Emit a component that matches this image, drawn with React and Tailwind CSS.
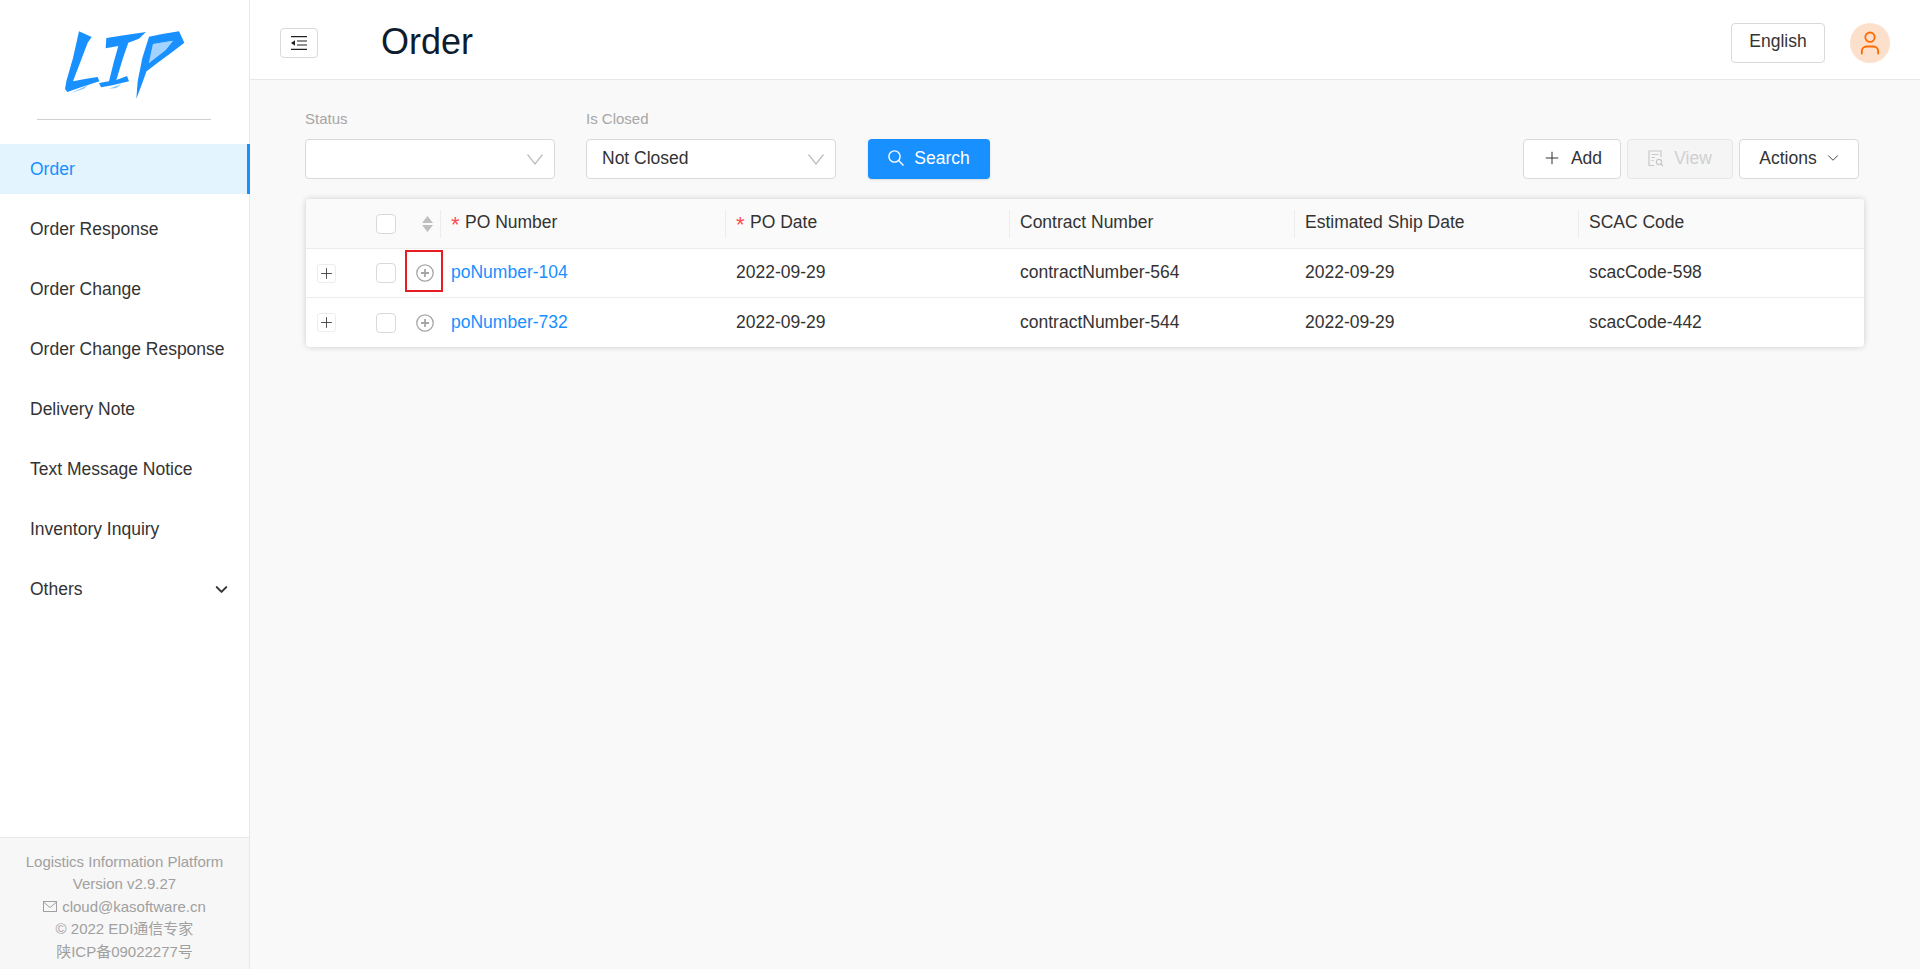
import { Plus, ChevronDown, User } from 'lucide-react'

const menu = ['Order', 'Order Response', 'Order Change', 'Order Change Response', 'Delivery Note', 'Text Message Notice', 'Inventory Inquiry']

const rows = [
  { po: 'poNumber-104', date: '2022-09-29', contract: 'contractNumber-564', ship: '2022-09-29', scac: 'scacCode-598' },
  { po: 'poNumber-732', date: '2022-09-29', contract: 'contractNumber-544', ship: '2022-09-29', scac: 'scacCode-442' },
]

function Logo() {
  return (
    <svg width="130" height="74" viewBox="180 80 390 222" fill="#1890ff">
      {/* L */}
      <path d="M240 90 L278 107 L266 124 L222 240 L262 232 L296 227 L301 240 L250 256 L205 272 L198 263 L202 240 L222 170 Z" />
      <path d="M215 276 L268 250 L255 262 Z" opacity="0.5" />
      {/* I */}
      <path d="M322 110 L385 100 L441 92 L420 112 L388 124 L372 170 L352 236 L384 224 L390 240 L340 252 L306 258 L300 245 L330 240 L345 180 L358 134 L320 141 Z" />
      <path d="M330 262 L368 248 L352 260 Z" opacity="0.5" />
      {/* P */}
      <path d="M450 106 L490 98 L540 90 L556 124 L520 152 L476 184 L440 212 L444 190 L500 146 L522 118 L462 128 L446 200 L428 250 L412 292 L416 240 L430 170 Z" />
      <path d="M462 128 L522 118 L500 146 L446 192 Z" opacity="0.4" />
    </svg>
  )
}

function FoldIcon() {
  return (
    <svg width="16" height="14" viewBox="0 0 16 14" fill="none" stroke="#222" strokeWidth="1.2">
      <path d="M0 0.7H16M6 5H16M6 9H16M0 13.3H16" />
      <path d="M0 7 L4 4.2 V9.8 Z" fill="#222" stroke="none" />
    </svg>
  )
}

function Checkbox() {
  return <span className="block w-5 h-5 bg-white border border-[#d9d9d9] rounded-[4px]" />
}

function SelectBox({ label, value, className }) {
  return (
    <div className={className}>
      <div className="text-[15px] leading-5 text-[#a6a6a6] mb-[10px] h-[20px]">{label}</div>
      <div className="h-10 w-[250px] bg-white border border-[#d9d9d9] rounded-[4px] flex items-center justify-between pl-[15px] pr-[11px] text-[17.5px] text-[#333]">
        <span className="mb-[2px]">{value}</span>
        <svg width="16" height="11" viewBox="0 0 16 11" fill="none" stroke="#bfbfbf" strokeWidth="1.3">
          <path d="M0.5 0.5 L8 10 L15.5 0.5" />
        </svg>
      </div>
    </div>
  )
}

function HeaderCell({ children, required, className }) {
  return (
    <div className={`flex items-center pl-[10px] h-full ${className}`}>
      {required && <span className="w-[14px] text-[#ff4d4f] text-[22px] leading-none mt-[3px]">*</span>}
      <span className="mb-[2px]">{children}</span>
    </div>
  )
}

function Divider() {
  return <span className="block w-px h-[28px] bg-[#ececec]" />
}

export default function App() {
  return (
    <div className="flex h-[969px] w-[1920px] overflow-hidden bg-[#f9f9f9] text-[#333] text-[17.5px]" style={{ fontFamily: '"Liberation Sans", "Noto Sans CJK SC", sans-serif' }}>
      {/* Sidebar */}
      <aside className="w-[250px] shrink-0 flex flex-col bg-white border-r border-[#e8e8e8]">
        <div className="h-[144px] shrink-0 flex flex-col items-center">
          <div className="h-[119px] pt-[28px] pr-[2px]">
            <Logo />
          </div>
          <div className="w-[174px] h-px bg-[#cfcfcf] mr-[2px]" />
        </div>
        <nav className="flex-1">
          {menu.map((m, i) => (
            <div key={m} className={`h-[50px] mb-[10px] flex items-center pl-[30px] ${i === 0 ? 'bg-[#e3f4fe] text-[#1890ff] border-r-[3px] border-[#1890ff] mr-[-1px]' : 'text-[#333]'}`}>
              {m}
            </div>
          ))}
          <div className="h-[50px] flex items-center justify-between pl-[30px] pr-[18px]">
            <span>Others</span>
            <ChevronDown size={19} strokeWidth={2.6} />
          </div>
        </nav>
        <footer className="h-[132px] shrink-0 bg-[#f7f7f7] border-t border-[#e8e8e8] pt-[12.5px] text-center text-[15px] leading-[22.5px] text-[#a0a0a0]">
          <div>Logistics Information Platform</div>
          <div>Version v2.9.27</div>
          <div className="flex items-center justify-center gap-[5px]">
            <svg width="14" height="11" viewBox="0 0 14 11" fill="none" stroke="#a0a0a0" strokeWidth="1">
              <rect x="0.5" y="0.5" width="13" height="10" />
              <path d="M0.5 1 L7 6.5 L13.5 1" />
            </svg>
            <span>cloud@kasoftware.cn</span>
          </div>
          <div>© 2022 EDI通信专家</div>
          <div>陕ICP备09022277号</div>
        </footer>
      </aside>

      {/* Main */}
      <main className="flex-1 min-w-0 flex flex-col">
        <header className="h-20 shrink-0 bg-white border-b border-[#e8e8e8] flex items-center pl-[30px] pr-[30px] pt-[6px]">
          <button className="w-[38px] h-[30px] flex items-center justify-center bg-white border border-[#d9d9d9] rounded-[4px]">
            <FoldIcon />
          </button>
          <h1 className="ml-[63px] text-[36px] leading-none text-[#0f1c2e] mb-[2px]">Order</h1>
          <div className="ml-auto flex items-center gap-[25px]">
            <button className="w-[94px] h-10 pb-[2px] bg-white border border-[#d9d9d9] rounded-[4px] text-[#333]">English</button>
            <div className="w-10 h-10 rounded-full bg-[#fde0cc] flex items-center justify-center">
              <User size={28} strokeWidth={1.6} color="#ff6a00" />
            </div>
          </div>
        </header>

        <div className="pl-[55px] pr-[55px] pt-[29px]">
          {/* Filters */}
          <div className="flex items-end">
            <SelectBox label="Status" value="" />
            <SelectBox label="Is Closed" value="Not Closed" className="ml-[31px]" />
            <button className="ml-[32px] w-[122px] h-10 pb-[2px] bg-[#1890ff] rounded-[4px] text-white font-medium flex items-center justify-center gap-[10px] shadow-sm">
              <svg width="16" height="16" viewBox="0 0 16 16" fill="none" stroke="#fff" strokeWidth="1.4">
                <circle cx="6.5" cy="6.5" r="5.6" />
                <path d="M10.6 10.6L15.5 15.5" />
              </svg>
              <span>Search</span>
            </button>
            <div className="ml-auto mr-[6px] flex gap-[6px]">
              <button className="w-[98px] h-10 pb-[2px] bg-white border border-[#d9d9d9] rounded-[4px] flex items-center justify-center gap-[9px]">
                <Plus size={20} strokeWidth={1.2} />
                <span>Add</span>
              </button>
              <button className="w-[106px] h-10 pb-[2px] bg-[#f5f5f5] border border-[#e6e6e6] rounded-[4px] flex items-center justify-center gap-[10px] text-[#d0d0d0]">
                <svg width="16" height="17" viewBox="0 0 16 17" fill="none" stroke="#c8c8c8" strokeWidth="1.2">
                  <path d="M6 15.5H1V1H13V7M3.5 4.5H10.5M3.5 7.5H7M3.5 10.5H5.5" />
                  <circle cx="11" cy="12" r="2.6" />
                  <path d="M13 14L15 16" />
                </svg>
                <span>View</span>
              </button>
              <button className="w-[120px] h-10 pb-[2px] pl-[3px] bg-white border border-[#d9d9d9] rounded-[4px] flex items-center justify-center gap-[7px]">
                <span>Actions</span>
                <ChevronDown size={18} strokeWidth={1.2} />
              </button>
            </div>
          </div>

          {/* Table */}
          <div className="relative mt-5 ml-[1px] w-[1558px] bg-white rounded-[4px] shadow-[0_0_6px_rgba(0,0,30,0.18)]">
            <div className="h-[50px] flex items-center bg-[#fafafa] border-b border-[#ececec] rounded-t-[4px]">
              <div className="w-[135px] shrink-0 flex items-center h-full">
                <div className="ml-[70px]"><Checkbox /></div>
                <svg className="ml-[26px]" width="11" height="16" viewBox="0 0 11 16" fill="#bfbfbf">
                  <path d="M5.5 0 L11 7 H0 Z M5.5 16 L0 9 H11 Z" />
                </svg>
                <span className="ml-auto"><Divider /></span>
              </div>
              <div className="w-[285px] flex items-center justify-between h-full">
                <HeaderCell required>PO Number</HeaderCell>
                <Divider />
              </div>
              <div className="w-[284px] flex items-center justify-between h-full">
                <HeaderCell required>PO Date</HeaderCell>
                <Divider />
              </div>
              <div className="w-[285px] flex items-center justify-between h-full">
                <HeaderCell>Contract Number</HeaderCell>
                <Divider />
              </div>
              <div className="w-[284px] flex items-center justify-between h-full">
                <HeaderCell>Estimated Ship Date</HeaderCell>
                <Divider />
              </div>
              <HeaderCell>SCAC Code</HeaderCell>
            </div>
            {rows.map((r, i) => (
              <div key={r.po} className={`h-[49px] flex items-center ${i === 0 ? 'border-b border-[#ececec]' : 'rounded-b-[4px]'}`}>
                <div className="w-[135px] shrink-0 flex items-center h-full">
                  <span className="ml-[11px] w-[19px] h-[19px] flex items-center justify-center border border-[#ededed] rounded-[3px] text-[#333]">
                    <Plus size={17} strokeWidth={1.2} />
                  </span>
                  <div className="ml-[40px]"><Checkbox /></div>
                  <svg className="ml-[20px]" width="18" height="18" viewBox="0 0 18 18" fill="none" stroke="#a6a6a6">
                    <circle cx="9" cy="9" r="8.2" strokeWidth="1.3" />
                    <path d="M9 5V13M5 9H13" strokeWidth="1.8" />
                  </svg>
                </div>
                <div className={`w-[285px] pl-[10px] text-[#1890ff] ${i === 0 ? 'mb-[2px]' : ''}`}>{r.po}</div>
                <div className={`w-[284px] pl-[10px] ${i === 0 ? 'mb-[2px]' : ''}`}>{r.date}</div>
                <div className={`w-[285px] pl-[10px] ${i === 0 ? 'mb-[2px]' : ''}`}>{r.contract}</div>
                <div className={`w-[284px] pl-[10px] ${i === 0 ? 'mb-[2px]' : ''}`}>{r.ship}</div>
                <div className={`pl-[10px] ${i === 0 ? 'mb-[2px]' : ''}`}>{r.scac}</div>
              </div>
            ))}
            {/* red annotation over the first row's expand icon */}
            <div className="absolute left-[99px] top-[51px] w-[38px] h-[42px] border-[2px] border-[#e81c24]" />
          </div>
        </div>
      </main>
    </div>
  )
}
